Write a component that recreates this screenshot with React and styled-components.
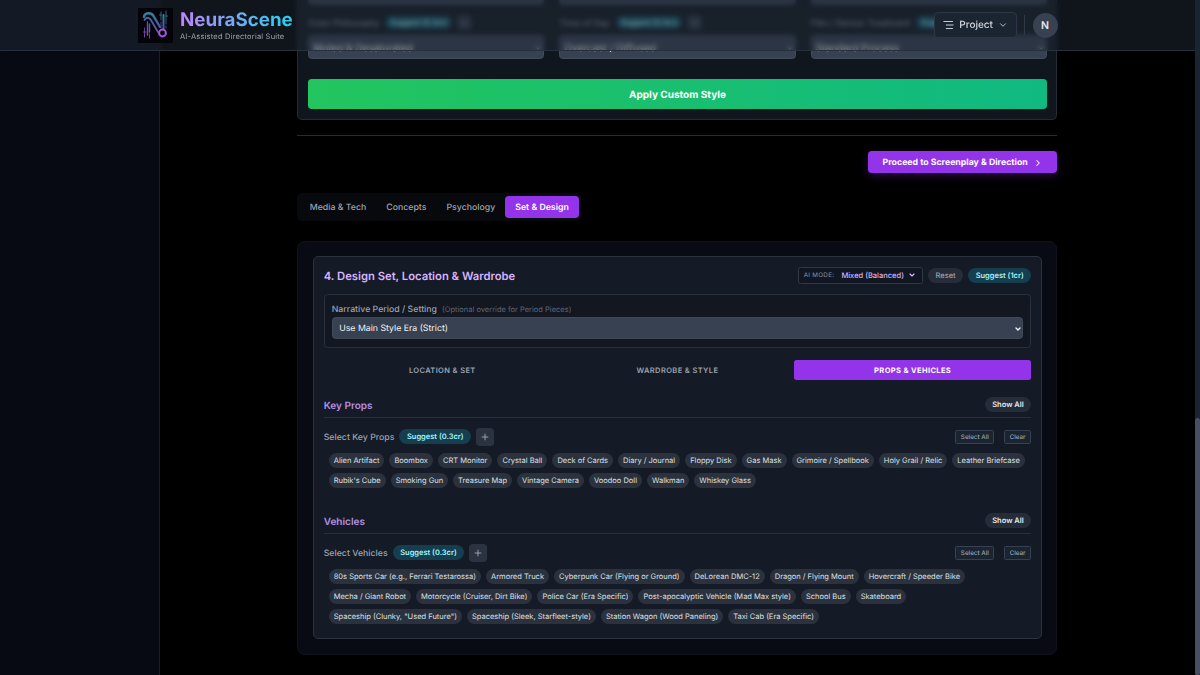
import * as React from "react";
import styled, { createGlobalStyle } from "styled-components";
import { ChevronDown, ChevronRight, Plus } from "lucide-react";

const GlobalStyle = createGlobalStyle`
  html {
    font-size: 10px;
  }

  *, *::before, *::after {
    box-sizing: border-box;
  }

  body {
    margin: 0;
    background: #000;
    color: #e5e7eb;
    font-family: Inter, "Liberation Sans", sans-serif;
    text-rendering: geometricPrecision;
    overflow: hidden;
  }

  button {
    margin: 0;
    padding: 0;
    border: 0;
    background: none;
    color: inherit;
    font: inherit;
    text-rendering: inherit;
    cursor: pointer;
    white-space: nowrap;
  }
`;

const Page = styled.div`
  display: flex;
  height: 675px;
  overflow: hidden;
`;

const Sidebar = styled.aside`
  flex: none;
  width: 16rem;
  background: #070a12;
  border-right: 1px solid #191f29;
`;

const Main = styled.main`
  flex: 1;
  display: flex;
  justify-content: center;
  padding-right: 0.6px;
`;

const Content = styled.div`
  width: 76rem;
`;

const ScrollTrack = styled.div`
  position: relative;
  z-index: 20;
  flex: none;
  display: flex;
  flex-direction: column;
  justify-content: flex-end;
  width: 5px;
  background: #1b2431;
`;

const ScrollThumb = styled.div`
  height: 257px;
  border-radius: 2.5px;
  background: #465061;
`;

/* header */

const Header = styled.header`
  position: fixed;
  z-index: 10;
  top: 0;
  left: 0;
  right: 5px;
  height: 51px;
  padding: 0 137.5px;
  display: flex;
  align-items: center;
  justify-content: space-between;
  background: rgba(31, 41, 55, 0.5);
  border-bottom: 1px solid #28303c;
  backdrop-filter: blur(2.5px);
`;

const Brand = styled.div`
  display: flex;
  align-items: center;
  gap: 7.5px;
`;

const BrandName = styled.div`
  font-weight: 700;
  font-size: 18.75px;
  line-height: 24px;
  color: transparent;
  background: linear-gradient(90deg, #c084fc, #22d3ee);
  background-clip: text;
`;

const BrandNote = styled.div`
  font-size: 7.5px;
  line-height: 10px;
  letter-spacing: 0.19px;
  color: #9ca3af;
`;

const HeaderTools = styled.div`
  display: flex;
  align-items: center;
`;

const ProjectButton = styled.button`
  display: flex;
  align-items: center;
  gap: 5px;
  height: 26.5px;
  padding: 0 7.5px 0 8.5px;
  border: 1px solid #2d3644;
  border-radius: 4px;
  background: #1b2431;
  font-weight: 500;
  font-size: 10px;
  color: #d7dae0;
`;

const HeaderRule = styled.div`
  width: 1px;
  height: 20px;
  margin: 0 7.5px;
  background: #303947;
`;

const Avatar = styled.div`
  width: 25px;
  height: 25px;
  border-radius: 50%;
  background: #374151;
  font-weight: 600;
  font-size: 10.5px;
  line-height: 25px;
  text-align: center;
`;

/* shared parts */

const Select = styled.div`
  display: flex;
  align-items: center;
  justify-content: space-between;
  height: ${(props) => (props.$large ? "24px" : "22px")};
  padding: ${(props) => (props.$large ? "1px 1px 0 4px" : "2px 0 0 6.5px")};
  border: 1px solid #414b5a;
  border-radius: 3.75px;
  background: #374151;
  font-size: ${(props) => (props.$large ? "10px" : "8.75px")};
  color: ${(props) => (props.$large ? "#fff" : "#f3f4f6")};
`;

const SuggestPill = styled.button`
  height: 15px;
  padding: 0 7.5px;
  border-radius: 8px;
  background: #153e4f;
  font-weight: 600;
  font-size: 7.5px;
  line-height: 15px;
  color: #a5f3fc;
`;

const GrayPill = styled(SuggestPill)`
  background: #262d39;
  font-weight: ${(props) => (props.$muted ? 500 : 600)};
  color: ${(props) => (props.$muted ? "#9ca3af" : "#e5e7eb")};
`;

const AddButton = styled.button`
  display: flex;
  align-items: center;
  justify-content: center;
  width: 17.5px;
  height: 17.5px;
  border-radius: 3.75px;
  background: #2b3340;
  color: #aab0bb;
`;

const FieldLabel = styled.div`
  padding-top: 2px;
  font-weight: 500;
  font-size: 8.75px;
  line-height: 12.5px;
  color: #9ca3af;
`;

/* custom style card */

const StyleCard = styled.section`
  height: 120px;
  padding: 0 9.5px 0 10px;
  border: 1px solid #252c36;
  border-top: 0;
  border-radius: 0 0 5px 5px;
  background: #10161d;
  overflow: hidden;
`;

const StyleGrid = styled.div`
  display: grid;
  grid-template-columns: repeat(3, minmax(0, 1fr));
  column-gap: 15px;
`;

const SelectTail = styled.div`
  height: 4.5px;
  border-radius: 0 0 3.75px 3.75px;
  background: #374151;
`;

const StyleLabel = styled.div`
  display: flex;
  align-items: center;
  gap: 5px;
  height: 17.5px;
  margin: 9.5px 0 3.5px;
  overflow: hidden;

  ${SuggestPill} {
    margin-left: 1px;
    padding: 0 5px;
    background: #14515f;
    height: 13px;
    line-height: 13px;
  }

  ${AddButton} {
    width: 15px;
    height: 15px;
  }

  ${FieldLabel} {
    color: #8b93a0;
  }
`;

const ApplyButton = styled.button`
  display: block;
  width: 100%;
  height: 30px;
  margin-top: 20px;
  padding-top: 1.5px;
  border-radius: 3.75px;
  background: linear-gradient(90deg, #22c55e, #10b981);
  font-weight: 700;
  font-size: 10px;
  color: #fff;
`;

const ProceedRow = styled.div`
  display: flex;
  justify-content: flex-end;
  margin-top: 15px;
  padding-top: 14.5px;
  border-top: 1px solid #272a30;
`;

const ProceedButton = styled.button`
  display: flex;
  align-items: center;
  gap: 5px;
  height: 22.5px;
  padding: 2px 14.5px 0 15px;
  border-radius: 3.75px;
  background: #9333ea;
  box-shadow: 0 3px 8px rgba(147, 51, 234, 0.25);
  font-weight: 700;
  font-size: 8.75px;
  color: #fff;
`;

const Tabs = styled.nav`
  display: inline-flex;
  margin-top: 20px;
  padding: 2.5px;
  border-radius: 5px;
  background: #07090d;
`;

const Tab = styled.button`
  height: 22.5px;
  padding: 1.5px 10px 0;
  border-radius: 3.75px;
  background: ${(props) => (props.$active ? "#9333ea" : "transparent")};
  font-weight: ${(props) => (props.$active ? 600 : 500)};
  font-size: 8.75px;
  color: ${(props) => (props.$active ? "#fff" : "#9ca3af")};
`;

/* design panel */

const Panel = styled.section`
  margin-top: 20px;
  height: 414px;
  padding: 14px 14.5px 15px 15px;
  border: 1px solid #10131c;
  border-radius: 7.5px;
  background: #080a14;
`;

const PanelInner = styled.div`
  height: 100%;
  padding: 10px 9.5px;
  border: 1px solid #2a323e;
  border-radius: 5px;
  background: #141a26;
`;

const PanelHead = styled.div`
  display: flex;
  align-items: center;
  gap: 5px;
  height: 17.5px;
`;

const PanelTitle = styled.h2`
  flex: 1;
  margin: 0;
  padding-top: 1px;
  font-weight: 600;
  font-size: 11.25px;
  color: #d8b4fe;
`;

const ModeSelect = styled.div`
  display: flex;
  align-items: center;
  height: 17.5px;
  padding: 0 6px 0 5px;
  border: 1px solid #303845;
  border-radius: 2.5px;
  background: #111722;
  font-weight: 500;
  font-size: 7.5px;
  color: #d8b4fe;
`;

const ModeLabel = styled.span`
  margin-right: 7px;
  font-weight: 400;
  font-size: 6.25px;
  letter-spacing: 0.31px;
  color: #8b93a0;
`;

const PeriodBox = styled.div`
  margin-top: 9.5px;
  height: 54px;
  padding: 7.5px 7px;
  border: 1px solid #2a313d;
  border-radius: 3.75px;
  background: #121722;
`;

const PeriodLabel = styled.div`
  display: flex;
  align-items: center;
  height: 12.5px;
  margin-bottom: 2.5px;
  padding-top: 3px;
  font-weight: 500;
  font-size: 8.75px;
  color: #9ca3af;
`;

const PeriodHint = styled.span`
  margin-left: 5px;
  font-weight: 400;
  font-size: 7.5px;
  color: #5f6775;
`;

const SectionTabs = styled.div`
  display: grid;
  grid-template-columns: 237fr 233fr 237fr;
  margin-top: 12px;
`;

const SectionTab = styled.button`
  height: 20.5px;
  padding-top: 1px;
  border-radius: 2.5px;
  background: ${(props) => (props.$active ? "#9333ea" : "transparent")};
  font-weight: ${(props) => (props.$active ? 700 : 600)};
  font-size: 7.5px;
  letter-spacing: 0.375px;
  text-transform: uppercase;
  color: ${(props) => (props.$active ? "#fff" : "#9ca3af")};
`;

const Group = styled.div`
  margin-top: ${(props) => props.$top};
`;

const GroupHead = styled.div`
  display: flex;
  align-items: center;
  justify-content: space-between;
  height: 20.5px;
  padding-bottom: 5px;
  border-bottom: 1px solid #29303c;
`;

const GroupTitle = styled.h3`
  margin: 0;
  padding-top: 2px;
  font-weight: 600;
  font-size: 10px;
  color: #b691e0;
`;

const GroupTools = styled.div`
  display: flex;
  align-items: center;
  gap: 5px;
  height: 17.5px;
  margin-top: 10px;
`;

const SmallButton = styled.button`
  height: 13.5px;
  padding: 0 4.7px;
  margin-left: ${(props) => (props.$push ? "auto" : "4.5px")};
  border: 1px solid #374151;
  border-radius: 1.5px;
  background: #1b2431;
  font-weight: 500;
  font-size: 6.25px;
  line-height: 12px;
  color: #9ca3af;
`;

const Chips = styled.div`
  display: flex;
  flex-wrap: wrap;
  gap: 5px;
  margin-top: 7.5px;
  padding: 0 5px;
`;

const Chip = styled.button`
  height: 15px;
  padding: 0 5px;
  border-radius: 8px;
  background: #2b323e;
  font-weight: 400;
  font-size: 7.5px;
  line-height: 15px;
  color: #dde0e5;
`;

const styleFields = [
  { label: "Color Philosophy", value: "Muted & Desaturated" },
  { label: "Time of Day", value: "Overcast / Diffused" },
  { label: "Film / Sensor Treatment", value: "Standard Process" },
];

const tabs = ["Media & Tech", "Concepts", "Psychology", "Set & Design"];

const sections = ["Location & Set", "Wardrobe & Style", "Props & Vehicles"];

const keyProps = [
  "Alien Artifact",
  "Boombox",
  "CRT Monitor",
  "Crystal Ball",
  "Deck of Cards",
  "Diary / Journal",
  "Floppy Disk",
  "Gas Mask",
  "Grimoire / Spellbook",
  "Holy Grail / Relic",
  "Leather Briefcase",
  "Rubik's Cube",
  "Smoking Gun",
  "Treasure Map",
  "Vintage Camera",
  "Voodoo Doll",
  "Walkman",
  "Whiskey Glass",
];

const vehicles = [
  "80s Sports Car (e.g., Ferrari Testarossa)",
  "Armored Truck",
  "Cyberpunk Car (Flying or Ground)",
  "DeLorean DMC-12",
  "Dragon / Flying Mount",
  "Hovercraft / Speeder Bike",
  "Mecha / Giant Robot",
  "Motorcycle (Cruiser, Dirt Bike)",
  "Police Car (Era Specific)",
  "Post-apocalyptic Vehicle (Mad Max style)",
  "School Bus",
  "Skateboard",
  'Spaceship (Clunky, "Used Future")',
  "Spaceship (Sleek, Starfleet-style)",
  "Station Wagon (Wood Paneling)",
  "Taxi Cab (Era Specific)",
];

const Logo = () => (
  <svg width="35" height="35" viewBox="0 0 35 35" fill="none">
    <defs>
      <linearGradient id="logo" x1="20" y1="3" x2="16" y2="31" gradientUnits="userSpaceOnUse">
        <stop offset="0" stopColor="#2b8f9c" />
        <stop offset="0.5" stopColor="#4f57a8" />
        <stop offset="1" stopColor="#a04bc4" />
      </linearGradient>
    </defs>
    <rect width="35" height="35" fill="#04040a" />
    <g stroke="url(#logo)" strokeLinecap="round">
      <path d="M6 9C6.500 4.500 13 4 15.500 8L22 19" strokeWidth="2.400" />
      <path d="M6.500 12C9 8 12 10 13.500 13L20 24" strokeWidth="1.800" />
      <path d="M9.500 14V27M11.500 16V24" strokeWidth="1.400" />
      <path d="M6.500 20V29M5.500 24H8M11.500 26V30" strokeWidth="0.800" />
      <path d="M25.500 7V21" strokeWidth="2" />
      <path d="M23 4V12M28 3V16M23 14V19M28 18V20M21.500 7H23M28 8H29.500" strokeWidth="0.800" />
    </g>
    <circle cx="24.500" cy="25" r="3.400" stroke="#a758d6" strokeWidth="2" />
  </svg>
);

const MenuIcon = () => (
  <svg width="11" height="10" viewBox="0 0 11 10" stroke="#c3c8d0" strokeWidth="1" strokeLinecap="round">
    <path d="M0.800 1.500H9.500M3.300 5H10.200M3.300 8.500H9.500" />
  </svg>
);

const ItemGroup = (props) => (
  <Group $top={props.top}>
    <GroupHead>
      <GroupTitle>{props.title}</GroupTitle>
      <GrayPill>Show All</GrayPill>
    </GroupHead>
    <GroupTools>
      <FieldLabel>Select {props.title}</FieldLabel>
      <SuggestPill>Suggest (0.3cr)</SuggestPill>
      <AddButton>
        <Plus size={10} />
      </AddButton>
      <SmallButton $push>Select All</SmallButton>
      <SmallButton>Clear</SmallButton>
    </GroupTools>
    <Chips>
      {props.items.map((item) => (
        <Chip key={item}>{item}</Chip>
      ))}
    </Chips>
  </Group>
);

const App = () => {
  return (
    <>
      <GlobalStyle />
      <Header>
        <Brand>
          <Logo />
          <div>
            <BrandName>NeuraScene</BrandName>
            <BrandNote>AI-Assisted Directorial Suite</BrandNote>
          </div>
        </Brand>
        <HeaderTools>
          <ProjectButton>
            <MenuIcon />
            Project
            <ChevronDown size={10} />
          </ProjectButton>
          <HeaderRule />
          <Avatar>N</Avatar>
        </HeaderTools>
      </Header>
      <Page>
        <Sidebar />
        <Main>
          <Content>
            <StyleCard>
              <StyleGrid>
                {styleFields.map((field) => (
                  <div key={field.label}>
                    <SelectTail />
                    <StyleLabel>
                      <FieldLabel>{field.label}</FieldLabel>
                      <SuggestPill>Suggest (0.3cr)</SuggestPill>
                      <AddButton>
                        <Plus size={8} />
                      </AddButton>
                    </StyleLabel>
                    <Select $large>
                      {field.value}
                      <ChevronDown size={8} strokeWidth={3} />
                    </Select>
                  </div>
                ))}
              </StyleGrid>
              <ApplyButton>Apply Custom Style</ApplyButton>
            </StyleCard>
            <ProceedRow>
              <ProceedButton>
                Proceed to Screenplay & Direction
                <ChevronRight size={10} strokeWidth={2.5} />
              </ProceedButton>
            </ProceedRow>
            <Tabs>
              {tabs.map((tab) => (
                <Tab key={tab} $active={tab === "Set & Design"}>
                  {tab}
                </Tab>
              ))}
            </Tabs>
            <Panel>
              <PanelInner>
                <PanelHead>
                  <PanelTitle>4. Design Set, Location & Wardrobe</PanelTitle>
                  <ModeSelect>
                    <ModeLabel>AI MODE:</ModeLabel>
                    Mixed (Balanced)
                    <ChevronDown size={8} strokeWidth={3.5} style={{ marginLeft: 4 }} />
                  </ModeSelect>
                  <GrayPill $muted>Reset</GrayPill>
                  <SuggestPill>Suggest (1cr)</SuggestPill>
                </PanelHead>
                <PeriodBox>
                  <PeriodLabel>
                    Narrative Period / Setting
                    <PeriodHint>(Optional override for Period Pieces)</PeriodHint>
                  </PeriodLabel>
                  <Select>
                    Use Main Style Era (Strict)
                    <ChevronDown size={8} strokeWidth={4} />
                  </Select>
                </PeriodBox>
                <SectionTabs>
                  {sections.map((name) => (
                    <SectionTab key={name} $active={name === "Props & Vehicles"}>
                      {name}
                    </SectionTab>
                  ))}
                </SectionTabs>
                <ItemGroup top="17.5px" title="Key Props" items={keyProps} />
                <ItemGroup top="25.5px" title="Vehicles" items={vehicles} />
              </PanelInner>
            </Panel>
          </Content>
        </Main>
        <ScrollTrack>
          <ScrollThumb />
        </ScrollTrack>
      </Page>
    </>
  );
};

export default App;
